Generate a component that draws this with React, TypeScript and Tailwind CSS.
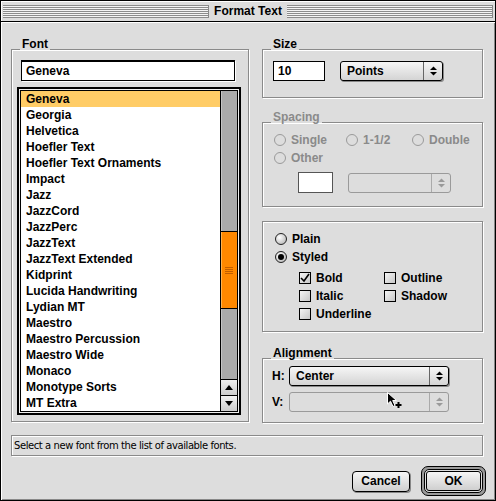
import React from "react";

const fonts = [
  "Geneva",
  "Georgia",
  "Helvetica",
  "Hoefler Text",
  "Hoefler Text Ornaments",
  "Impact",
  "Jazz",
  "JazzCord",
  "JazzPerc",
  "JazzText",
  "JazzText Extended",
  "Kidprint",
  "Lucida Handwriting",
  "Lydian MT",
  "Maestro",
  "Maestro Percussion",
  "Maestro Wide",
  "Monaco",
  "Monotype Sorts",
  "MT Extra",
];

function Arrows({ dim }: { dim?: boolean }) {
  const c = dim ? "#9a9a9a" : "#000";
  return (
    <svg width="7" height="10" viewBox="0 0 7 10">
      <path d="M3.5 0.5 L7 4 H0 Z" fill={c} />
      <path d="M0 6 H7 L3.5 9.5 Z" fill={c} />
    </svg>
  );
}

function Popup({ label, className, dim }: { label?: string; className: string; dim?: boolean }) {
  return (
    <div
      className={`flex h-[20px] rounded-[3px] border ${
        dim
          ? "border-[#9a9a9a] bg-[#ddd]"
          : "border-black bg-gradient-to-b from-[#f6f6f6] to-[#d4d4d4] shadow-[1px_1px_0_#888]"
      } ${className}`}
    >
      <div className="flex-1 flex items-center pl-[6px] truncate">{label}</div>
      <div
        className={`w-[19px] flex items-center justify-center border-l ${
          dim ? "border-[#aaa]" : "border-[#666]"
        }`}
      >
        <Arrows dim={dim} />
      </div>
    </div>
  );
}

function Group({
  label,
  dim,
  className,
  children,
}: {
  label?: string;
  dim?: boolean;
  className?: string;
  children: React.ReactNode;
}) {
  return (
    <div>
      {label && (
        <div
          className={`relative z-10 ml-[9px] -mb-[1px] w-fit px-[2px] bg-[#ddd] h-[14px] pt-[1px] ${
            dim ? "text-[#8a8a8a]" : ""
          }`}
        >
          {label}
        </div>
      )}
      <div
        className={`border border-[#8a8a8a] shadow-[1px_1px_0_#fff,inset_1px_1px_0_#fff] ${className ?? ""}`}
      >
        {children}
      </div>
    </div>
  );
}

function Radio({ label, on, dim }: { label: string; on?: boolean; dim?: boolean }) {
  return (
    <div className="flex items-center gap-[5px] h-[18px]">
      <span
        className={`w-[12px] h-[12px] rounded-full border flex items-center justify-center ${
          dim
            ? "border-[#9a9a9a] bg-[#ddd]"
            : "border-[#222] bg-[radial-gradient(circle_at_35%_35%,#fff,#aaa)]"
        }`}
      >
        {on && <span className="w-[6px] h-[6px] rounded-full bg-black" />}
      </span>
      <span className={dim ? "text-[#8a8a8a]" : ""}>{label}</span>
    </div>
  );
}

function Check({ label, on }: { label: string; on?: boolean }) {
  return (
    <div className="flex items-center gap-[5px] h-[18px]">
      <span className="w-[12px] h-[12px] border border-black bg-gradient-to-br from-[#f4f4f4] to-[#c8c8c8] flex items-center justify-center">
        {on && (
          <svg width="10" height="10" viewBox="0 0 10 10">
            <path d="M1 5 L4 8 L9 1" stroke="#000" strokeWidth="1.6" fill="none" />
          </svg>
        )}
      </span>
      <span>{label}</span>
    </div>
  );
}

function FontList() {
  return (
    <div className="w-[224px] border-2 border-black bg-[#eee] p-[1px]">
      <div className="flex border border-black bg-white">
        <div className="w-[199px]">
          {fonts.map((f, i) => (
            <div
              key={f}
              className={`h-[16px] leading-[16px] pl-[5px] whitespace-nowrap ${
                i === 0 ? "bg-[#ffcc66]" : ""
              }`}
            >
              {f}
            </div>
          ))}
        </div>
        <div className="w-[17px] border-l border-black flex flex-col">
          <div className="flex-1 bg-[#aaa] shadow-[inset_1px_0_0_#c4c4c4]">
            <div className="mt-[140px] h-[78px] bg-[#ff8800] border-y border-black shadow-[inset_1px_0_0_#ffb24d] flex flex-col items-center justify-center gap-[1px]">
              <div className="w-[8px] h-[1px] bg-[#c25e00]" />
              <div className="w-[8px] h-[1px] bg-[#c25e00]" />
              <div className="w-[8px] h-[1px] bg-[#c25e00]" />
              <div className="w-[8px] h-[1px] bg-[#c25e00]" />
            </div>
          </div>
          <div className="h-[16px] border-t border-black bg-gradient-to-b from-[#f0f0f0] to-[#ccc] flex items-center justify-center">
            <svg width="8" height="5" viewBox="0 0 8 5">
              <path d="M4 0 L8 5 H0 Z" fill="#000" />
            </svg>
          </div>
          <div className="h-[16px] border-t border-black bg-gradient-to-b from-[#f0f0f0] to-[#ccc] flex items-center justify-center">
            <svg width="8" height="5" viewBox="0 0 8 5">
              <path d="M0 0 H8 L4 5 Z" fill="#000" />
            </svg>
          </div>
        </div>
      </div>
    </div>
  );
}

function Stripes() {
  return (
    <div className="flex-1 h-[13px] bg-[repeating-linear-gradient(to_bottom,#8c8c8c_0px,#8c8c8c_1px,#f4f4f4_1px,#f4f4f4_2px)] border-r border-[#888]" />
  );
}

export default function App() {
  return (
    <div className="relative w-[496px] h-[501px] bg-[#ddd] border border-black flex flex-col font-['Liberation_Sans',Arial,sans-serif] text-[12px] leading-[14px] font-bold text-black select-none">
      {/* Title bar */}
      <div className="h-[21px] shrink-0 border-b border-black flex items-center px-[2px] bg-[#ddd] shadow-[inset_1px_1px_0_#fff]">
        <Stripes />
        <div className="px-[5px]">Format Text</div>
        <Stripes />
      </div>

      <div className="flex-1 flex flex-col px-[10px] pt-[14px] shadow-[inset_1px_1px_0_#fff,inset_-1px_-1px_0_#888]">
        <div className="flex gap-[13px]">
          {/* Font */}
          <div className="w-[238px]">
            <Group label="Font" className="px-[5px] pt-[10px] pb-[6px]">
              <div className="ml-[4px] w-[214px] h-[21px] border border-black border-t-2 bg-white shadow-[1px_1px_0_#fff] flex items-center pl-[4px]">
                Geneva
              </div>
              <div className="mt-[6px]">
                <FontList />
              </div>
            </Group>
          </div>

          {/* Right column */}
          <div className="w-[221px] flex flex-col">
            <Group label="Size" className="flex pl-[10px] pt-[11px] pb-[16px]">
              <div className="w-[52px] h-[20px] border border-black bg-white flex items-center pl-[4px]">
                10
              </div>
              <Popup label="Points" className="ml-[15px] w-[103px]" />
            </Group>

            <div className="mt-[11px]">
              <Group label="Spacing" dim className="pl-[11px] pt-[8px] pb-[13px]">
                <div className="flex">
                  <div className="w-[72px]">
                    <Radio label="Single" dim />
                  </div>
                  <div className="w-[66px]">
                    <Radio label="1-1/2" dim />
                  </div>
                  <Radio label="Double" dim />
                </div>
                <Radio label="Other" dim />
                <div className="flex mt-[5px] ml-[24px]">
                  <div className="w-[35px] h-[21px] border border-[#555] bg-white" />
                  <Popup className="ml-[15px] mt-[1px] w-[103px]" dim />
                </div>
              </Group>
            </div>

            <div className="mt-[14px]">
              <Group className="pl-[12px] pt-[8px] pb-[8px]">
                <Radio label="Plain" />
                <Radio label="Styled" on />
                <div className="mt-[3px] ml-[24px] grid grid-cols-[85px_auto]">
                  <Check label="Bold" on />
                  <Check label="Outline" />
                  <Check label="Italic" />
                  <Check label="Shadow" />
                  <Check label="Underline" />
                </div>
              </Group>
            </div>

            <div className="mt-[13px]">
              <Group label="Alignment" className="pl-[9px] pt-[7px] pb-[10px] flex flex-col gap-[6px]">
                <div className="flex items-center">
                  <span className="w-[17px]">H:</span>
                  <Popup label="Center" className="w-[160px]" />
                </div>
                <div className="flex items-center">
                  <span className="w-[17px]">V:</span>
                  <Popup className="w-[160px]" dim />
                </div>
              </Group>
            </div>
          </div>
        </div>

        {/* Status */}
        <div className="mt-[12px] w-[472px] h-[21px] border border-[#8a8a8a] shadow-[1px_1px_0_#fff,inset_1px_1px_0_#fff] flex items-center pl-[2px] text-[10px] font-normal font-['DejaVu_Sans',sans-serif] tracking-[-0.42px]">
          Select a new font from the list of available fonts.
        </div>

        {/* Buttons */}
        <div className="mt-[10px] -mr-[1px] flex justify-end items-center gap-[11px]">
          <div className="w-[58px] h-[21px] rounded-[4px] border border-black bg-gradient-to-b from-[#f6f6f6] to-[#cfcfcf] shadow-[1px_1px_0_#888] flex items-center justify-center">
            Cancel
          </div>
          <div className="w-[65px] h-[30px] rounded-[7px] border border-black bg-[#9a9a9a] p-[2px]">
            <div className="w-full h-full rounded-[5px] border border-black bg-[#ddd] p-[1px]">
              <div className="w-full h-full rounded-[3px] border border-black bg-gradient-to-b from-[#f6f6f6] to-[#cfcfcf] flex items-center justify-center">
                OK
              </div>
            </div>
          </div>
        </div>
      </div>

      {/* Mouse pointer */}
      <svg
        className="absolute left-[385px] top-[390px]"
        width="18"
        height="20"
        viewBox="0 0 18 20"
      >
        <path
          d="M1.5 1.5 L1.5 13 L4.5 10.2 L7 15.5 L9 14.6 L6.7 9.5 L10.5 9.5 Z"
          fill="#000"
          stroke="#fff"
          strokeWidth="1"
        />
        <path d="M12.5 11 V17 M9.5 14 H15.5" stroke="#000" strokeWidth="2" />
      </svg>
    </div>
  );
}
